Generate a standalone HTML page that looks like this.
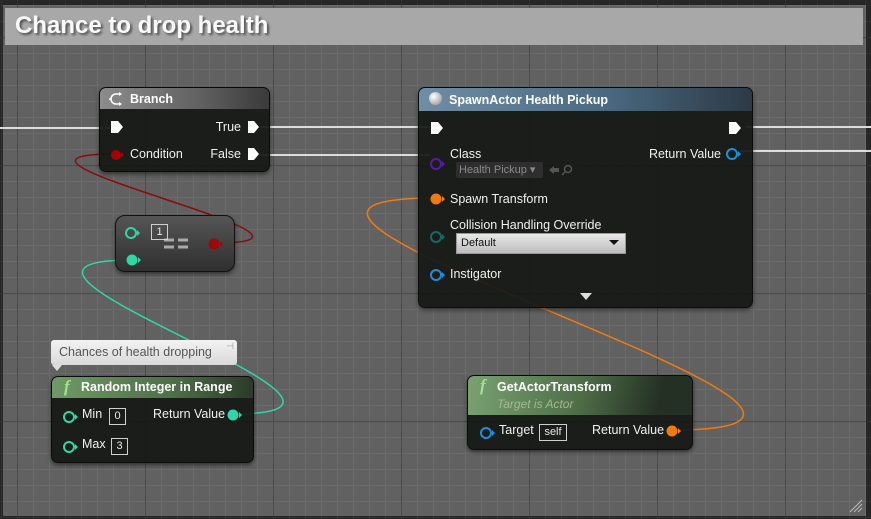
<!DOCTYPE html>
<html><head><meta charset="utf-8">
<style>
*{margin:0;padding:0;box-sizing:border-box}
body{width:871px;height:519px;overflow:hidden;background:#262626;font-family:"Liberation Sans",sans-serif;position:relative;color:#fff}
.abs{position:absolute}
.node{position:absolute;background:rgba(22,24,22,0.93);border:1px solid #0b0b0b;border-radius:7px;box-shadow:0 2px 4px rgba(0,0,0,.5);overflow:hidden}
.hdr{position:absolute;left:0;right:0;top:0;font-weight:bold;font-size:12.5px}
.t{position:absolute;font-size:12.5px;color:#f0f0f0;white-space:nowrap}
.box{position:absolute;border:1px solid #cfcfcf;font-size:11px;color:#e8e8e8;text-align:center;line-height:14px}
</style></head><body>
<svg class="abs" style="left:0;top:0" width="871" height="519">
<defs>
<pattern id="gi" width="16" height="16" patternUnits="userSpaceOnUse" x="1" y="5"><path d="M0 0H16M0 0V16" stroke="#3a3a3a" stroke-width="1"/></pattern>
<pattern id="gin" width="16" height="16" patternUnits="userSpaceOnUse" x="1" y="5"><path d="M0.5 0V16M0 0.5H16" stroke="#6b6b6b" stroke-width="1"/></pattern>
<pattern id="gmaj" width="128" height="128" patternUnits="userSpaceOnUse" x="17" y="37"><path d="M0.5 0V128M0 0.5H128" stroke="#4c4c4c" stroke-width="1.2"/></pattern>
</defs>
<rect width="871" height="519" fill="#262626"/>
<rect width="871" height="519" fill="url(#gi)"/>
<rect x="3" y="5" width="863" height="511" fill="#616161"/>
<rect x="3" y="5" width="863" height="511" fill="url(#gin)"/>
<rect x="3" y="5" width="863" height="511" fill="url(#gmaj)"/>
<rect x="5" y="8" width="858" height="37" fill="#a8a8a8"/>
<path d="M850 512L862 500M854 512L862 504M858 512L862 508" stroke="#bbb" stroke-width="1"/>
<path d="M0 128H110M260 127H430M745 127H871" stroke="#dcdcdc" stroke-width="2" fill="none"/>
<path d="M260 155H430M740 151H871" stroke="#dcdcdc" stroke-width="2" fill="none"/>
<path d="M214 243C380 243 -55 154 116 154" stroke="#8a0b0b" stroke-width="1.5" fill="none"/>
<path d="M233 414C440 414 -75 260 133 260" stroke="#2fd6a6" stroke-width="1.5" fill="none"/>
<path d="M672 430C990 430 125 198 436 198" stroke="#f07a10" stroke-width="1.5" fill="none"/>
</svg>
<div class="abs" style="left:15px;top:12px;font-size:24px;font-weight:bold;color:#fafafa;text-shadow:2px 2px 2px #555">Chance to drop health</div>

<!-- Branch -->
<div class="node" style="left:99px;top:87px;width:171px;height:85px">
 <div class="hdr" style="height:21px;background:linear-gradient(90deg,#8c8c8c,#606060 60%,#3a3a3a)">
  <svg class="abs" style="left:8px;top:3px" width="16" height="16"><path d="M12 3H8A5 5 0 0 0 8 13H12M1 8H3" stroke="#fff" stroke-width="1.6" fill="none"/><path d="M11 1l3 2-3 2zM11 11l3 2-3 2z" fill="#fff"/></svg>
  <span style="position:absolute;left:30px;top:4px">Branch</span></div>
 <svg class="abs" style="left:0;top:0" width="171" height="85">
  <path d="M11 33h7l5 6-5 6h-7z M148 33h6l5 6-5 6h-6z M148 60h6l5 6-5 6h-6z" fill="#fff"/>
  <circle cx="16" cy="67" r="5" fill="#a00"/><path d="M21 64l3 3-3 3z" fill="#a00"/>
 </svg>
 <div class="t" style="right:28px;top:32px">True</div>
 <div class="t" style="left:30px;top:59px">Condition</div>
 <div class="t" style="right:28px;top:59px">False</div>
</div>

<!-- Equals -->
<div class="abs" style="left:115px;top:215px;width:120px;height:57px;border-radius:10px;background:linear-gradient(#555,#2f2f2f);border:1px solid #111;box-shadow:0 2px 4px rgba(0,0,0,.5)">
 <svg class="abs" style="left:0;top:0" width="120" height="57">
  <circle cx="15" cy="17" r="5" fill="none" stroke="#2fd6a6" stroke-width="2"/><path d="M21 14l3 3-3 3z" fill="#2fd6a6"/>
  <circle cx="16" cy="44" r="5.5" fill="#2fd6a6"/><path d="M22 41l3 3-3 3z" fill="#2fd6a6"/>
  <circle cx="98" cy="28" r="5.5" fill="#9a0a0a"/><path d="M104 25l3 3-3 3z" fill="#9a0a0a"/>
  <path d="M48 24h10M62 24h10M48 31h10M62 31h10" stroke="#aaa" stroke-width="3"/>
 </svg>
 <div class="box" style="left:35px;top:8px;width:17px;height:16px">1</div>
</div>

<!-- Comment bubble -->
<div class="abs" style="left:51px;top:340px;width:186px;height:25px;background:linear-gradient(#f2f2f2,#dadada);border-radius:3px;font-size:12.5px;color:#555;padding:5px 0 0 8px">Chances of health dropping<span style="position:absolute;right:3px;top:1px;font-size:9px;color:#999">⊣</span></div>
<div class="abs" style="left:52px;top:365px;width:0;height:0;border-left:5px solid transparent;border-right:5px solid transparent;border-top:6px solid #ddd"></div>

<!-- Random Integer -->
<div class="node" style="left:51px;top:376px;width:203px;height:87px">
 <div class="hdr" style="height:21px;background:linear-gradient(90deg,#6f9a66,#4f6f48 60%,#2b3a2a)"><span style="position:absolute;left:12px;top:0px;font-size:17px;font-style:italic;font-family:'Liberation Serif',serif;color:#a5e090">f</span><span style="position:absolute;left:29px;top:3px">Random Integer in Range</span></div>
 <svg class="abs" style="left:0;top:0" width="203" height="87">
  <circle cx="17" cy="40" r="5" fill="none" stroke="#2fd6a6" stroke-width="2"/><path d="M23 37l3 3-3 3z" fill="#2fd6a6"/>
  <circle cx="17" cy="70" r="5" fill="none" stroke="#2fd6a6" stroke-width="2"/><path d="M23 67l3 3-3 3z" fill="#2fd6a6"/>
  <circle cx="181" cy="38" r="5.5" fill="#2fd6a6"/><path d="M187 35l3 3-3 3z" fill="#2fd6a6"/>
 </svg>
 <div class="t" style="left:30px;top:30px">Min</div>
 <div class="box" style="left:57px;top:31px;width:17px;height:17px">0</div>
 <div class="t" style="left:101px;top:30px">Return Value</div>
 <div class="t" style="left:30px;top:60px">Max</div>
 <div class="box" style="left:59px;top:61px;width:17px;height:17px">3</div>
</div>

<!-- SpawnActor -->
<div class="node" style="left:418px;top:87px;width:335px;height:221px">
 <div class="hdr" style="height:23px;background:linear-gradient(90deg,#6f8ea6,#4b6a82 55%,#2c3a46)"><span style="position:absolute;left:10px;top:4px;width:13px;height:13px;border-radius:50%;background:radial-gradient(circle at 35% 35%,#fff,#888)"></span><span style="position:absolute;left:30px;top:5px">SpawnActor Health Pickup</span></div>
 <svg class="abs" style="left:0;top:0" width="335" height="221">
  <path d="M12 34h7l5 6-5 6h-7z M310 34h7l5 6-5 6h-7z" fill="#fff"/>
  <circle cx="17" cy="76" r="5" fill="none" stroke="#5a1aa0" stroke-width="2"/><path d="M23 73l3 3-3 3z" fill="#5a1aa0"/>
  <circle cx="17" cy="111" r="5.5" fill="#f07a10"/><path d="M23 108l3 3-3 3z" fill="#f07a10"/>
  <circle cx="17" cy="149" r="5" fill="none" stroke="#176a5e" stroke-width="2"/><path d="M23 146l3 3-3 3z" fill="#176a5e"/>
  <circle cx="17" cy="187" r="5" fill="none" stroke="#1a90d8" stroke-width="2"/><path d="M23 184l3 3-3 3z" fill="#1a90d8"/>
  <circle cx="313" cy="66" r="5" fill="none" stroke="#1a90d8" stroke-width="2"/><path d="M319 63l3 3-3 3z" fill="#1a90d8"/>
  <path d="M161 205h12l-6 7z" fill="#ddd"/>
  <path d="M130 82l5-4v2h5v4h-5v2z" fill="#555"/><circle cx="149" cy="81" r="3.5" fill="none" stroke="#555" stroke-width="1.5"/><path d="M146 84l-3 3" stroke="#555" stroke-width="1.5"/>
 </svg>
 <div class="t" style="left:31px;top:59px">Class</div>
 <div class="abs" style="left:37px;top:74px;width:87px;height:16px;background:#2e2e2e;border-radius:2px;font-size:11px;color:#8a8a8a;padding:1px 0 0 3px">Health Pickup ▾</div>
 <div class="t" style="right:31px;top:59px">Return Value</div>
 <div class="t" style="left:31px;top:104px">Spawn Transform</div>
 <div class="t" style="left:31px;top:130px">Collision Handling Override</div>
 <div class="abs" style="left:37px;top:145px;width:170px;height:21px;background:linear-gradient(#e8e8e8,#bdbdbd);border:1px solid #999;font-size:11px;color:#111;padding:3px 0 0 4px">Default<span style="position:absolute;right:6px;top:6px;border-left:5px solid transparent;border-right:5px solid transparent;border-top:5px solid #111"></span></div>
 <div class="t" style="left:31px;top:179px">Instigator</div>
</div>

<!-- GetActorTransform -->
<div class="node" style="left:467px;top:375px;width:226px;height:75px">
 <div class="hdr" style="height:39px;background:linear-gradient(100deg,#79a272,#4e6e48 50%,#243024 85%)"><span style="position:absolute;left:12px;top:0px;font-size:17px;font-style:italic;font-family:'Liberation Serif',serif;color:#a5e090">f</span><span style="position:absolute;left:29px;top:4px">GetActorTransform</span><span style="position:absolute;left:29px;top:21px;font-weight:normal;font-style:italic;font-size:12px;color:#a8b890">Target is Actor</span></div>
 <svg class="abs" style="left:0;top:0" width="226" height="75">
  <circle cx="18" cy="57" r="5" fill="none" stroke="#1a90d8" stroke-width="2"/><path d="M24 54l3 3-3 3z" fill="#1a90d8"/>
  <circle cx="204" cy="55" r="5.5" fill="#f07a10"/><path d="M210 52l3 3-3 3z" fill="#f07a10"/>
 </svg>
 <div class="t" style="left:31px;top:47px">Target</div>
 <div class="box" style="left:71px;top:48px;width:28px;height:17px">self</div>
 <div class="t" style="left:124px;top:47px">Return Value</div>
</div>
</body></html>
